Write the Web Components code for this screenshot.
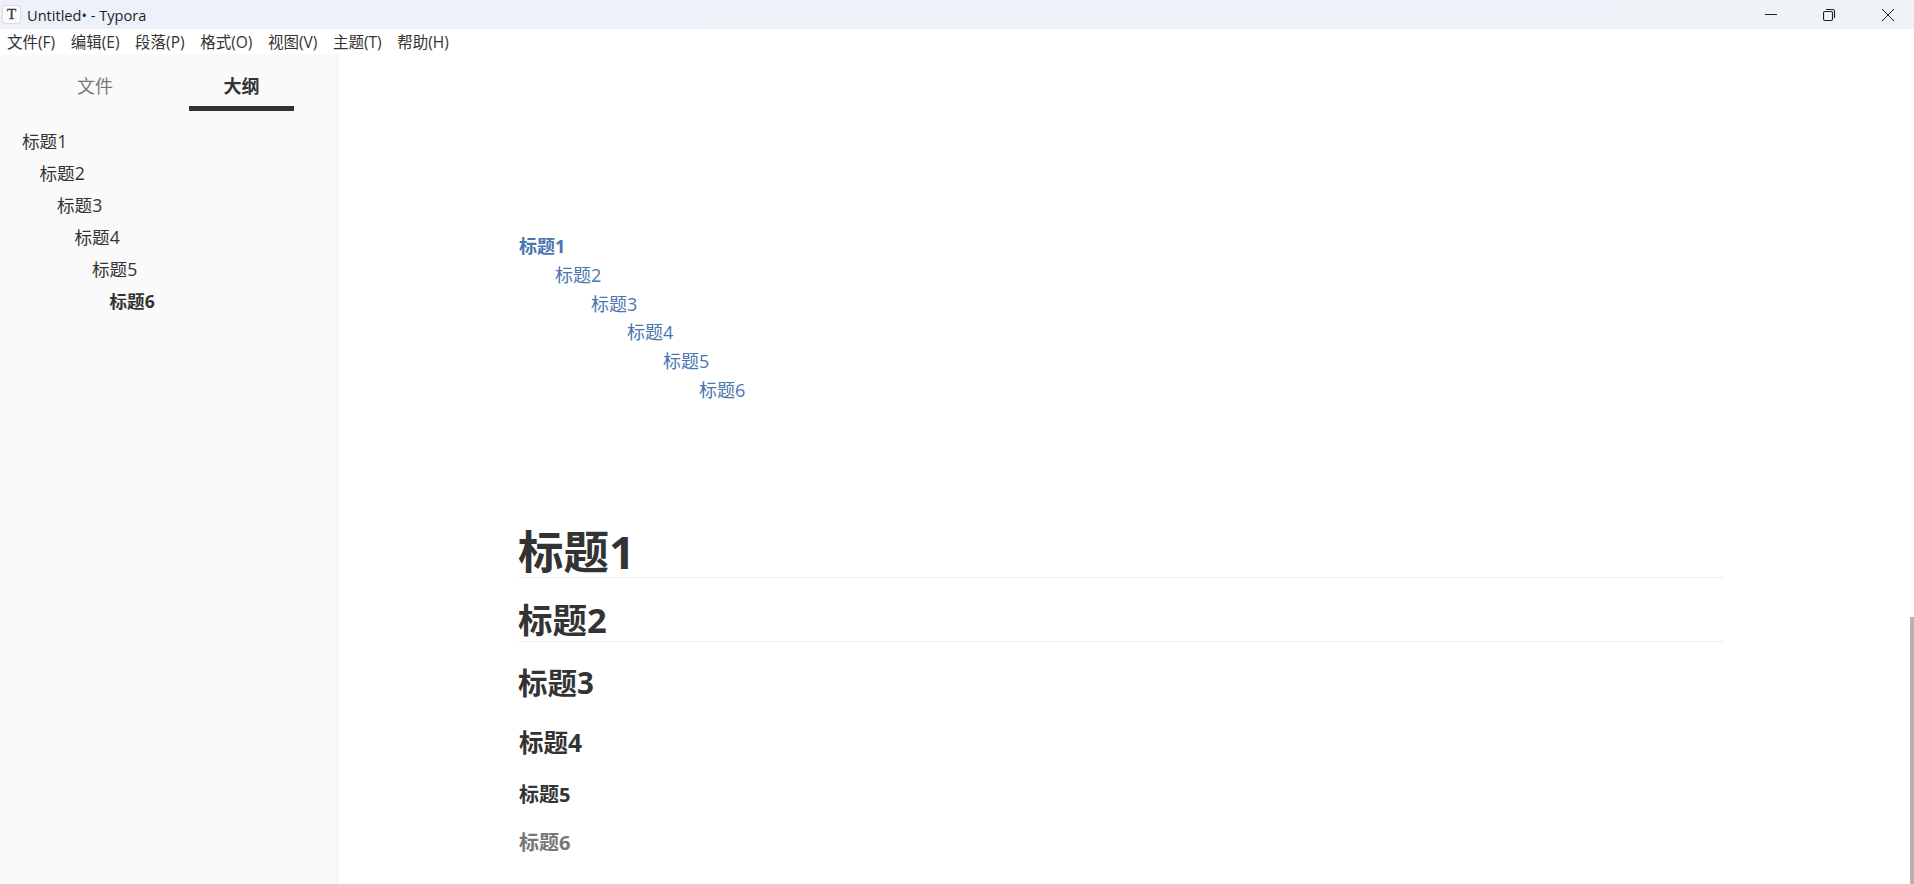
<!DOCTYPE html>
<html lang="zh"><head><meta charset="utf-8"><title>Untitled• - Typora</title>
<style>html,body{margin:0;height:100%;overflow:hidden;background:#fff}
body{font-family:"Open Sans","Noto Sans CJK SC",sans-serif}</style></head>
<body>
<typora-app>
<title-bar title="Untitled• - Typora"></title-bar>
<menu-bar items="文件(F),编辑(E),段落(P),格式(O),视图(V),主题(T),帮助(H)"></menu-bar>
</typora-app>
<script>
function el(name, css, html){
  customElements.define(name, class extends HTMLElement{
    constructor(){ super(); this.attachShadow({mode:'open'}); }
    connectedCallback(){ const s=this.shadowRoot; if(s.childNodes.length) return;
      s.innerHTML='<style>'+css+'</style>'+(typeof html==='function'?html(this):html);
    }
  });
}
const CJK='"Open Sans","Noto Sans CJK SC",sans-serif';
el('title-bar',`:host{display:flex;align-items:center;height:29px;background:linear-gradient(90deg,#ecf1fa,#eff3f8);color:#1f1f1f;font:14.6px "Open Sans","Noto Sans",sans-serif}
.logo{width:17px;height:17px;margin-left:3px;margin-right:7px;background:#fcfcfc;border-radius:3px;box-shadow:0 0 0 1px #dcdcdc;display:flex;align-items:center;justify-content:center;font:15px "Liberation Serif",serif;-webkit-text-stroke:.3px #333;color:#333}
.t{flex:1}
.b{width:58px;height:29px;display:flex;align-items:center;justify-content:center}
.b.x{width:56px;justify-content:flex-start;padding-left:23px;box-sizing:border-box}
svg{display:block}`,
h=>`<div class="logo">T</div><div class="t">${h.getAttribute('title')}</div>
<div class="b"><svg width="14" height="14" fill="none" stroke="#222"><path d="M1 6.5H13"/></svg></div>
<div class="b"><svg width="14" height="14" fill="none" stroke="#222" stroke-width="1.1"><rect x="1.5" y="3.5" width="9" height="9" rx="1.5"/><path d="M4 1.5H10.5a2 2 0 0 1 2 2V10"/></svg></div>
<div class="b x"><svg width="14" height="14" fill="none" stroke="#222"><path d="M1 1L13 13M13 1L1 13"/></svg></div>`);
el('menu-bar',`:host{display:flex;height:25px;background:#fff;align-items:center;padding-left:7px;gap:15.6px;font:15.5px ${CJK};color:#333}
span{white-space:nowrap}`,
h=>h.getAttribute('items').split(',').map(x=>`<span>${x}</span>`).join(''));
el('side-tabs',`:host{display:flex;height:57px;font:18px ${CJK};color:#777}
.t{display:flex;justify-content:center;padding-top:18px;box-sizing:border-box;height:57px}
.f{margin-left:43px;width:104px}
.g{width:42px}
.a{width:105px;color:#333;font-weight:700;border-bottom:5px solid #333}`,
`<div class="t f">文件</div><div class="g"></div><div class="t a">大纲</div>`);
el('outline-item',`:host{display:block;height:32px;font:17.6px/33px ${CJK};color:#333;white-space:nowrap;padding-left:calc(var(--lv,0)*17.5px)}
:host([active]){font-weight:700}`,`<slot></slot>`);
el('side-bar',`:host{display:block;width:337px;border-right:1px solid #eee;background:#fafafa;flex:none;height:100%}
.o{padding:14px 0 0 22px}`,
`<side-tabs></side-tabs><div class="o"><slot></slot></div>`);
el('toc-item',`:host{display:block;font:18px/28.8px ${CJK};color:#4a76b0;white-space:nowrap;padding-left:calc(var(--lv,0)*36px)}
:host([active]){font-weight:700}`,`<slot></slot>`);
el('md-heading',`:host{display:block;color:#333;font-family:${CJK};font-weight:700;white-space:nowrap}
:host([l="1"]){font-size:45.5px;line-height:51px;padding-top:5px;height:51px;border-bottom:1px solid #eee;text-indent:-1px}
:host([l="2"]){font-size:34.5px;line-height:43px;padding-top:7px;margin-top:13px;border-bottom:1px solid #eee;text-indent:-1px}
:host([l="3"]){font-size:29.5px;line-height:40px;margin-top:21px;text-indent:-1px}
:host([l="4"]){font-size:24.5px;line-height:36px;margin-top:22px}
:host([l="5"]){font-size:20px;line-height:30px;margin-top:19px}
:host([l="6"]){font-size:20px;line-height:30px;margin-top:18px;color:#777}`,`<slot></slot>`);
el('editor-pane',`:host{display:block;position:relative;flex:1;height:100%;overflow:hidden;background:#fff}
.c{padding:178px 190px 0 181px}
.h{margin-top:116px}
.thumb{position:absolute;right:0;top:563px;width:4px;height:267px;background:#b3b3b3}`,
`<div class="c"><slot name="toc"></slot><div class="h"><slot></slot></div></div><div class="thumb"></div>`);
el('typora-app',`:host{display:flex;flex-direction:column;height:884px;overflow:hidden}
.m{display:flex;flex:1;min-height:0}`,
`<slot></slot><div class="m"><side-bar id="s"></side-bar><editor-pane id="e"></editor-pane></div>`);
const root=document.querySelector('typora-app').shadowRoot;
const sb=root.getElementById('s'), ep=root.getElementById('e');
for(let i=0;i<6;i++){
  const o=document.createElement('outline-item');o.textContent='标题'+(i+1);o.style.setProperty('--lv',i);if(i==5)o.setAttribute('active','');sb.appendChild(o);
  const t=document.createElement('toc-item');t.slot='toc';t.textContent='标题'+(i+1);t.style.setProperty('--lv',i);if(i==0)t.setAttribute('active','');ep.appendChild(t);
  const h=document.createElement('md-heading');h.setAttribute('l',i+1);h.textContent='标题'+(i+1);ep.appendChild(h);
}
</script>
</body></html>
